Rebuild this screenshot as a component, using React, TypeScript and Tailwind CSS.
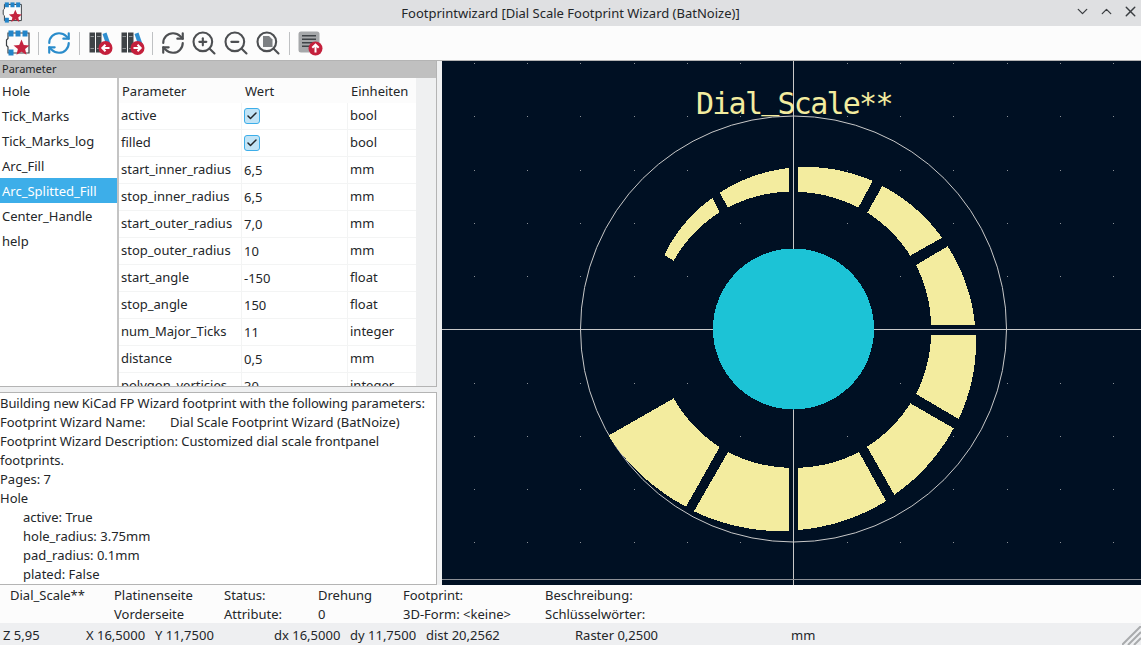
import { RefreshCw, ZoomIn, ZoomOut, Search, ChevronDown, ChevronUp, X, Check } from "lucide-react";

const CX = 793.5;
const CY = 329;
type P = [number, number];
function polar(p: P): [number, number] {
  const dx = p[0] - CX;
  const dy = p[1] - CY;
  return [Math.hypot(dx, dy), Math.atan2(dy, dx)];
}
function arcPts(a: P, b: P) {
  const [r1, t1] = polar(a);
  const [r2, t2raw] = polar(b);
  let d = t2raw - t1;
  if (d > Math.PI) d -= 2 * Math.PI;
  if (d < -Math.PI) d += 2 * Math.PI;
  const out: string[] = [];
  for (let i = 0; i <= 24; i++) {
    const f = i / 24;
    const r = r1 + (r2 - r1) * f;
    const t = t1 + d * f;
    out.push(`${(CX + r * Math.cos(t)).toFixed(1)},${(CY + r * Math.sin(t)).toFixed(1)}`);
  }
  return out;
}
// each: innerStart, outerStart, outerEnd, innerEnd
const segments: [P, P, P, P][] = [
  [[673.7, 260.7], [664.3, 255], [712.3, 198], [719.7, 212.3]],
  [[727.7, 207.7], [720, 192.7], [789, 168], [789, 191.7]],
  [[798, 192], [798, 167.3], [872.7, 181], [858.3, 207.7]],
  [[867.3, 212.7], [882.3, 186], [942, 237.7], [910.3, 255.7]],
  [[916, 265], [947.7, 246.3], [975, 325], [931, 325]],
  [[931, 335], [976, 335], [958.7, 419], [916, 394]],
  [[910.3, 403.3], [953.7, 428.3], [894.3, 494.7], [867, 446.7]],
  [[859, 452], [886, 501], [798, 530], [798, 467.7]],
  [[789, 467.7], [789, 531], [694, 511.3], [728, 452]],
  [[719.7, 447], [686, 506.7], [608.3, 435.7], [673.7, 398.3]],
];
const polys = segments.map(([a, b, c, d]) => [...arcPts(a, d), ...arcPts(c, b)].join(" "));

const gridXs = Array.from({ length: 13 }, (_, i) => 473.6 + i * 53.3);
const gridYs = Array.from({ length: 10 }, (_, i) => 63 + i * 53.25);

const listItems = ["Hole", "Tick_Marks", "Tick_Marks_log", "Arc_Fill", "Arc_Splitted_Fill", "Center_Handle", "help"];
const rows: [string, string, string][] = [
  ["active", "#", "bool"],
  ["filled", "#", "bool"],
  ["start_inner_radius", "6,5", "mm"],
  ["stop_inner_radius", "6,5", "mm"],
  ["start_outer_radius", "7,0", "mm"],
  ["stop_outer_radius", "10", "mm"],
  ["start_angle", "-150", "float"],
  ["stop_angle", "150", "float"],
  ["num_Major_Ticks", "11", "integer"],
  ["distance", "0,5", "mm"],
  ["polygon_verticies", "30", "integer"],
];

function FootprintIcon({ s }: { s: number }) {
  return (
    <svg width={s} height={s} viewBox="0 0 26 26" className="shrink-0">
      <path d="M3 3h21v20H3v-6l-1.500-1.500V10L3 8.500z" fill="#fcfcfc" stroke="#3a3f44" strokeWidth="1.200" />
      <g fill="#2385c9">
        <rect x="3.500" y="0.500" width="5" height="6" />
        <rect x="10.500" y="0.500" width="5" height="6" />
        <rect x="17.500" y="0.500" width="5" height="6" />
        <rect x="3.500" y="19.500" width="5" height="6" />
      </g>
      <path d="M16.500 9.500l2.300 5.500 5.700.4-4.400 3.700 1.400 5.600-5-3-5 3 1.400-5.600-4.400-3.700 5.700-.4z" fill="#c4243f" />
    </svg>
  );
}
function LibIcon({ right }: { right?: boolean }) {
  return (
    <svg width="24" height="24" viewBox="0 0 24 24" className="shrink-0">
      <rect x="0.500" y="1.500" width="5.500" height="20" fill="#3f4347" />
      <rect x="7" y="1.500" width="5.500" height="20" fill="#3f4347" />
      <g fill="#8f9396">
        <rect x="1.500" y="5" width="3.500" height="1" />
        <rect x="8" y="5" width="3.500" height="1" />
        <rect x="1.500" y="17" width="3.500" height="1" />
        <rect x="8" y="17" width="3.500" height="1" />
      </g>
      <path d="M13.500 3l4-1.500 4.500 13-4 1.500z" fill="#2f8fd0" />
      <circle cx="16.500" cy="17" r="7" fill="#c4203c" />
      <path
        d={right ? "M12.500 17h7M16.500 13.800l3.200 3.200-3.200 3.200" : "M20.500 17h-7M16.500 13.800l-3.200 3.200 3.200 3.200"}
        fill="none"
        stroke="#fff"
        strokeWidth="2"
      />
    </svg>
  );
}
function FitIcon() {
  return (
    <div className="relative h-7 w-7 shrink-0">
      <Search size={28} color="#4d4f52" strokeWidth={1.8} />
      <svg width="28" height="28" viewBox="0 0 28 28" className="absolute left-0 top-0">
        <path d="M9 7h6l3.500 3.500V18H9z" fill="#7d8083" />
      </svg>
    </div>
  );
}
function ExportIcon() {
  return (
    <svg width="25" height="25" viewBox="0 0 25 25" className="shrink-0">
      <rect x="0.500" y="0.500" width="21" height="21" rx="2.500" fill="#a6a8aa" />
      <g fill="#3f4347">
        <rect x="4" y="4" width="14" height="1.500" />
        <rect x="4" y="7.500" width="14" height="1.500" />
        <rect x="4" y="11" width="14" height="1.500" />
        <rect x="4" y="14.500" width="9" height="1.500" />
      </g>
      <circle cx="17.500" cy="17.500" r="7" fill="#c4203c" />
      <path d="M17.500 21.500v-7.500M14.300 16.800l3.200-3.200 3.200 3.200" fill="none" stroke="#fff" strokeWidth="2" />
    </svg>
  );
}
function Sep() {
  return <div className="h-[23px] w-px shrink-0 bg-[#bfc1c3]" />;
}
function Box() {
  return (
    <span className="flex h-4 w-4 items-center justify-center rounded-[3px] border border-[#3daee9] bg-[#c2e4f6]">
      <Check size={12} color="#232629" strokeWidth={3} />
    </span>
  );
}

export default function App() {
  return (
    <div
      className="flex h-[645px] w-[1141px] flex-col overflow-hidden bg-[#eff0f1] text-[13px] text-[#232629]"
      style={{ fontFamily: '"Noto Sans", sans-serif' }}
    >
      {/* Title bar */}
      <div className="relative flex h-[26px] shrink-0 items-center justify-center bg-[#dfe0e2]">
        <div className="absolute left-[2px] top-[2px]">
          <FootprintIcon s={21} />
        </div>
        <span className="leading-[24px]">Footprintwizard [Dial Scale Footprint Wizard (BatNoize)]</span>
        <div className="absolute right-[2px] top-[3px] flex items-center gap-[7px] text-[#3a3d40]">
          <ChevronDown size={17} strokeWidth={1.8} />
          <ChevronUp size={17} strokeWidth={1.8} />
          <X size={17} strokeWidth={2} />
        </div>
      </div>
      {/* Toolbar */}
      <div className="flex h-[35px] shrink-0 items-center border-b border-[#b4b4b4] bg-[#fcfcfc] pl-[5px]">
        <FootprintIcon s={26} />
        <div className="ml-[7px]"><Sep /></div>
        <div className="ml-[7px]"><RefreshCw size={26} color="#2a8ccb" strokeWidth={2} /></div>
        <div className="ml-[7px]"><Sep /></div>
        <div className="ml-[9px]"><LibIcon /></div>
        <div className="ml-[8px]"><LibIcon right /></div>
        <div className="ml-[7px]"><Sep /></div>
        <div className="ml-[7px]"><RefreshCw size={26} color="#4d4f52" strokeWidth={2} /></div>
        <div className="ml-[4px]"><ZoomIn size={28} color="#4d4f52" strokeWidth={1.8} /></div>
        <div className="ml-[4px]"><ZoomOut size={28} color="#4d4f52" strokeWidth={1.8} /></div>
        <div className="ml-[4px]"><FitIcon /></div>
        <div className="ml-[7px]"><Sep /></div>
        <div className="ml-[8px]"><ExportIcon /></div>
      </div>
      {/* Main */}
      <div className="flex h-[524px] shrink-0">
        <div className="flex w-[437px] shrink-0 flex-col">
          <div className="flex h-[326px] shrink-0 flex-col border-b border-r border-[#b4b4b4]">
            <div className="h-[17px] shrink-0 bg-[#c0c0c0] pl-[2px] text-[11px] leading-[15px]">Parameter</div>
            <div className="flex min-h-0 flex-1">
              <div className="w-[117px] shrink-0 bg-white">
                {listItems.map((t, i) => (
                  <div
                    key={t}
                    className={`h-[25px] pl-[2px] leading-[26px] ${i === 4 ? "bg-[#3daee9] text-white" : ""}`}
                  >
                    {t}
                  </div>
                ))}
              </div>
              <div className="w-[2px] shrink-0 bg-[#c4c4c4]" />
              <div className="min-w-0 w-[297px] shrink-0 overflow-hidden bg-white">
                <div className="flex h-[25px] bg-[#fcfcfc] leading-[27px]">
                  <div className="w-[123px] pl-[3px]">Parameter</div>
                  <div className="w-[106px] pl-[3px]">Wert</div>
                  <div className="pl-[3px]">Einheiten</div>
                </div>
                {rows.map(([a, b, c]) => (
                  <div key={a} className="flex h-[27px] border-b border-[#f3f4f4] leading-[25px]">
                    <div className="w-[123px] shrink-0 border-r border-[#f3f4f4] pl-[2px]">{a}</div>
                    <div className="flex h-[26px] w-[106px] shrink-0 items-center border-r border-[#f3f4f4] pl-[2px]">
                      {b === "#" ? <Box /> : b}
                    </div>
                    <div className="pl-[2px]">{c}</div>
                  </div>
                ))}
              </div>
            </div>
          </div>
          <div className="h-[5px] shrink-0" />
          <div className="h-[193px] shrink-0 overflow-hidden border border-l-0 border-[#b4b4b4] bg-white pt-[1px] leading-[19px]">
            <div className="tracking-[-0.06px]">Building new KiCad FP Wizard footprint with the following parameters:</div>
            <div className="flex">
              <span className="w-[170px]">Footprint Wizard Name:</span>
              <span>Dial Scale Footprint Wizard (BatNoize)</span>
            </div>
            <div className="tracking-[-0.03px]">Footprint Wizard Description: Customized dial scale frontpanel</div>
            <div>footprints.</div>
            <div>Pages: 7</div>
            <div>Hole</div>
            <div className="pl-[23px]">active: True</div>
            <div className="pl-[23px]">hole_radius: 3.75mm</div>
            <div className="pl-[23px]">pad_radius: 0.1mm</div>
            <div className="pl-[23px]">plated: False</div>
          </div>
        </div>
        <div className="ml-[5px] min-w-0 flex-1 bg-[#001023]">
          <svg width="699" height="524" viewBox="442 61 699 524" className="block">
            <g fill="#8a8f96">
              {gridXs.flatMap((x) =>
                gridYs.map((y) => <rect key={`${x}-${y}`} x={Math.round(x)} y={Math.round(y)} width="1" height="1" />)
              )}
            </g>
            <circle cx={CX} cy={CY} r="213" fill="none" stroke="#c8c8c8" strokeWidth="1" />
            <g fill="#f3ec9f" shapeRendering="crispEdges">
              {polys.map((p, i) => (
                <polygon key={i} points={p} />
              ))}
            </g>
            <path d="M442 329.500H1141M793.500 61V585" stroke="#c8c8c8" strokeWidth="1" shapeRendering="crispEdges" />
            <path d="M442 579.500H1141" stroke="#8c9096" strokeWidth="1" shapeRendering="crispEdges" />
            <circle cx={CX} cy={CY} r="80.500" fill="#1cc3d6" shapeRendering="crispEdges" />
            <text
              x="696"
              y="114"
              letterSpacing="-1.75"
              fill="#f3ec9f"
              fontSize="30"
              style={{ fontFamily: '"DejaVu Sans Mono", monospace' }}
            >
              Dial<tspan dy="-5">_</tspan><tspan dy="5">Scale**</tspan>
            </text>
          </svg>
        </div>
      </div>
      {/* Info panel */}
      <div className="flex h-[38px] shrink-0 bg-[#fcfcfc] pt-[1px] leading-[19px]">
        <div className="w-[114px] pl-[10px]">Dial_Scale**</div>
        <div className="w-[110px]"><div>Platinenseite</div><div>Vorderseite</div></div>
        <div className="w-[94px]"><div>Status:</div><div>Attribute:</div></div>
        <div className="w-[85px]"><div>Drehung</div><div>0</div></div>
        <div className="w-[142px]"><div>Footprint:</div><div>3D-Form: &lt;keine&gt;</div></div>
        <div><div>Beschreibung:</div><div>Schlüsselwörter:</div></div>
      </div>
      {/* Status bar */}
      <div className="relative flex h-[22px] shrink-0 items-center bg-[#eeeff1] pt-[2px] leading-[20px]">
        <div className="w-[86px] pl-[3px]">Z 5,95</div>
        <div className="w-[69px]">X 16,5000</div>
        <div className="w-[119px]">Y 11,7500</div>
        <div className="w-[76px]">dx 16,5000</div>
        <div className="w-[76px]">dy 11,7500</div>
        <div className="w-[149px]">dist 20,2562</div>
        <div className="w-[216px]">Raster 0,2500</div>
        <div>mm</div>
        <svg width="19" height="19" viewBox="0 0 19 19" className="absolute bottom-0 right-0">
          <path d="M0 19L19 0M6 19L19 6M12 19L19 12" stroke="#a9abad" strokeWidth="2" />
        </svg>
      </div>
    </div>
  );
}
